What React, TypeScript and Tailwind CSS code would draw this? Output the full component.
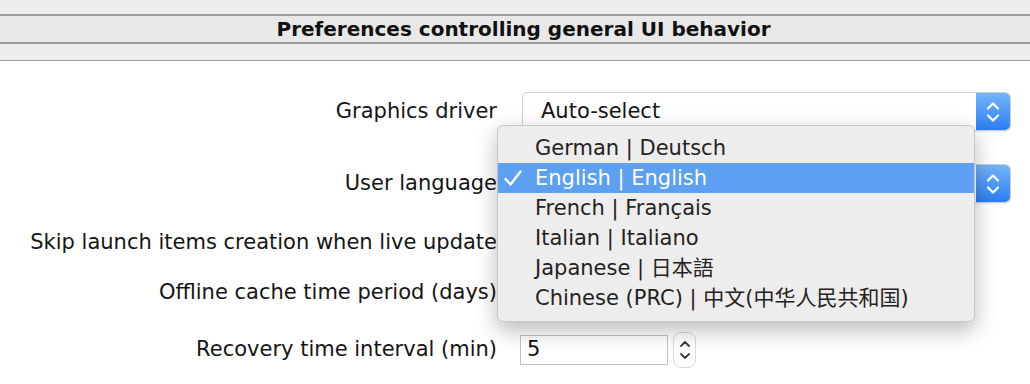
import React from "react";

const LANGS = [
  "German | Deutsch",
  "English | English",
  "French | Français",
  "Italian | Italiano",
  "Japanese | 日本語",
  "Chinese (PRC) | 中文(中华人民共和国)",
];

const FONT = "font-['DejaVu_Sans','Noto_Sans_CJK_SC',sans-serif]";

function BlueArrows() {
  return (
    <div className="w-[34px] h-full rounded-r-[5px] bg-gradient-to-b from-[#72b3fc] to-[#2a7ef3] flex items-center justify-center">
      <svg width="16" height="26" viewBox="0 0 16 26" fill="none" stroke="white" strokeWidth="2.2" strokeLinecap="round" strokeLinejoin="round">
        <path d="M3 9.5 L8 4.5 L13 9.5" />
        <path d="M3 16.5 L8 21.5 L13 16.5" />
      </svg>
    </div>
  );
}

function Select({ value }: { value: string }) {
  return (
    <div className="ml-[2px] w-[489px] h-[39px] flex rounded-[5px] border border-[#cfcfcf] bg-white shadow-[0_1px_1px_rgba(0,0,0,0.08)]">
      <div className="flex-1 flex items-center pl-[18px] pt-[1px] text-[21px] text-[#151515]">{value}</div>
      <BlueArrows />
    </div>
  );
}

function Row({ label, className, children }: { label: string; className: string; children?: React.ReactNode }) {
  return (
    <div className={`flex items-center ${className}`}>
      <div className="w-[497px] text-right text-[21px] text-[#151515] whitespace-nowrap">{label}</div>
      <div className="ml-[23px] flex items-center">{children}</div>
    </div>
  );
}

export default function App() {
  return (
    <div className={`relative w-[1030px] h-[384px] bg-white overflow-hidden ${FONT}`}>
      <div className="h-[14px] bg-[#eeeeee]" />
      <div className="h-[30px] bg-[#e8e8e8] border-y-2 border-[#9c9c9c] flex items-center justify-center pl-[17px]">
        <span className="font-bold text-[20px] text-[#111]">
          Preferences controlling general UI behavior
        </span>
      </div>
      <div className="h-[17px] bg-[#eeeeee] border-b border-[#a0a0a0]" />

      <div className="pt-[31px]">
        <Row label="Graphics driver" className="h-[39px]">
          <Select value="Auto-select" />
        </Row>
        <Row label="User language" className="h-[39px] mt-[33px]">
          <Select value="" />
        </Row>
        <Row label="Skip launch items creation when live update" className="h-[30px] mt-[25px]" />
        <Row label="Offline cache time period (days)" className="h-[30px] mt-[20px]" />
        <Row label="Recovery time interval (min)" className="h-[30px] mt-[27px]">
          <div className="w-[148px] h-[30px] border border-[#c2c2c2] bg-white flex items-center pl-[6px] text-[21px] text-[#111]">
            5
          </div>
          <div className="ml-[5px] w-[23px] h-[36px] rounded-[8px] border border-[#dadada] bg-white flex items-center justify-center">
            <svg width="14" height="28" viewBox="0 0 14 28" fill="none" stroke="#3a3a3a" strokeWidth="1.8" strokeLinecap="round" strokeLinejoin="round">
              <path d="M3 10 L7 6 L11 10" />
              <path d="M3 18 L7 22 L11 18" />
            </svg>
          </div>
        </Row>
      </div>

      <div className="absolute left-[497px] top-[125px] w-[478px] h-[197px] rounded-[6px] border border-[#c9c9c9] bg-[#ededed] shadow-[0_8px_22px_rgba(0,0,0,0.28)] pt-[7px]">
        {LANGS.map((l, i) => {
          const active = i === 1;
          return (
            <div
              key={l}
              className={`h-[30px] flex items-center text-[21px] whitespace-nowrap ${active ? "bg-[#5d9ff1] text-white" : "text-[#262222]"}`}
            >
              <div className="w-[37px] pl-[5px] flex items-center">
                {active && (
                  <svg width="20" height="18" viewBox="0 0 20 18" fill="none" stroke="white" strokeWidth="2.4" strokeLinecap="round" strokeLinejoin="round">
                    <path d="M2.5 10 L7.5 15.5 L17.5 2.5" />
                  </svg>
                )}
              </div>
              <span className="pt-[2px]">{l}</span>
            </div>
          );
        })}
      </div>
    </div>
  );
}
